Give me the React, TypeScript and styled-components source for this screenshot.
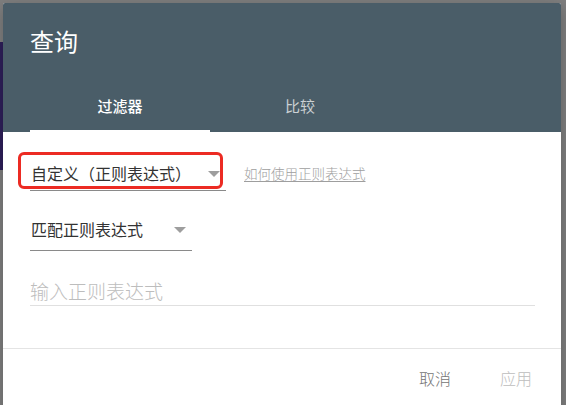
import React from 'react';
import styled, { createGlobalStyle } from 'styled-components';

const GlobalStyle = createGlobalStyle`
  html, body {
    margin: 0;
    padding: 0;
    background: #7f7f7f;
  }
  body {
    font-family: "Noto Sans CJK SC", "Noto Sans", sans-serif;
  }
`;

const Backdrop = styled.div`
  width: 566px;
  height: 405px;
  box-sizing: border-box;
  padding: 3px 5px 0 3px;
  overflow: hidden;
  background:
    linear-gradient(#2e1f5a, #2e1f5a) 0 42px / 3px 128px no-repeat,
    #7f7f7f;
`;

const Dialog = styled.div`
  width: 558px;
  height: 420px;
  background: #fff;
  border-radius: 2px 2px 0 0;
  display: flex;
  flex-direction: column;
  box-shadow: 0 4px 16px rgba(0, 0, 0, 0.25);
`;

const Header = styled.div`
  height: 129px;
  background: #4a5d68;
  border-radius: 2px 2px 0 0;
  padding-left: 27px;
  display: flex;
  flex-direction: column;
`;

const Title = styled.h1`
  margin: 22px 0 0;
  font-size: 24px;
  line-height: 32px;
  font-weight: 400;
  color: #fff;
`;

const Tabs = styled.div`
  margin-top: auto;
  display: flex;
`;

const Tab = styled.div<{ $active?: boolean }>`
  position: relative;
  width: 180px;
  height: 48px;
  box-sizing: border-box;
  padding-bottom: 6px;
  display: flex;
  align-items: center;
  justify-content: center;
  font-size: 15px;
  font-weight: ${(p) => (p.$active ? 500 : 400)};
  color: ${(p) => (p.$active ? '#fff' : 'rgba(255, 255, 255, 0.72)')};

  &::after {
    content: '';
    position: absolute;
    left: 0;
    right: 0;
    bottom: 0;
    height: 2px;
    background: ${(p) => (p.$active ? '#fff' : 'transparent')};
  }
`;

const Body = styled.div`
  padding: 23px 26px 0 27px;
  display: flex;
  flex-direction: column;
`;

const Row = styled.div`
  display: flex;
  align-items: center;
`;

const Select = styled.div<{ $width: number; $height?: number; $highlight?: boolean }>`
  position: relative;
  width: ${(p) => p.$width}px;
  height: ${(p) => p.$height ?? 36}px;
  box-sizing: border-box;
  border-bottom: 1px solid #8a8a8a;
  display: flex;
  align-items: center;
  justify-content: space-between;
  padding: 0 6px ${(p) => (p.$height ?? 36) - 36}px 1px;
  font-size: 16px;
  font-weight: 400;
  color: #333;

  &::before {
    content: '';
    display: ${(p) => (p.$highlight ? 'block' : 'none')};
    position: absolute;
    left: -12px;
    top: -3px;
    width: 205px;
    height: 37px;
    box-sizing: border-box;
    border: 3px solid #ec2b23;
    border-radius: 6px;
    pointer-events: none;
  }
`;

const Caret = styled.span`
  width: 0;
  height: 0;
  border-left: 6px solid transparent;
  border-right: 6px solid transparent;
  border-top: 6px solid #9e9e9e;
  margin-top: 2px;
`;

const HelpLink = styled.a`
  margin-left: 18px;
  font-size: 13.5px;
  font-weight: 300;
  color: #9e9e9e;
  text-decoration: underline;
  text-underline-offset: 2px;
`;

const SecondRow = styled(Row)`
  margin-top: 20px;
`;

const Input = styled.input`
  margin-top: 18px;
  height: 37px;
  box-sizing: border-box;
  border: none;
  border-bottom: 1px solid #e0e0e0;
  padding: 6px 0 0;
  font-family: inherit;
  font-size: 19px;
  font-weight: 300;
  outline: none;
  background: transparent;

  &::placeholder {
    color: #bdbdbd;
  }
`;

const Footer = styled.div`
  margin-top: 42px;
  border-top: 1px solid #e4e4e4;
  padding: 11px 21px 0 0;
  display: flex;
  justify-content: flex-end;
  gap: 33px;
`;

const Button = styled.button<{ $disabled?: boolean }>`
  height: 36px;
  padding: 0 8px;
  border: none;
  background: transparent;
  font-family: inherit;
  font-size: 16px;
  font-weight: 300;
  color: ${(p) => (p.$disabled ? '#bdbdbd' : '#757575')};
`;

const App: React.FC = () => {
  return (
    <>
      <GlobalStyle />
      <Backdrop>
        <Dialog>
          <Header>
            <Title>查询</Title>
            <Tabs>
              <Tab $active>过滤器</Tab>
              <Tab>比较</Tab>
            </Tabs>
          </Header>
          <Body>
            <Row>
              <Select $width={196} $highlight>
                <span>自定义（正则表达式）</span>
                <Caret />
              </Select>
              <HelpLink>如何使用正则表达式</HelpLink>
            </Row>
            <SecondRow>
              <Select $width={162} $height={40}>
                <span>匹配正则表达式</span>
                <Caret />
              </Select>
            </SecondRow>
            <Input placeholder="输入正则表达式" />
          </Body>
          <Footer>
            <Button>取消</Button>
            <Button $disabled>应用</Button>
          </Footer>
        </Dialog>
      </Backdrop>
    </>
  );
};

export default App;
